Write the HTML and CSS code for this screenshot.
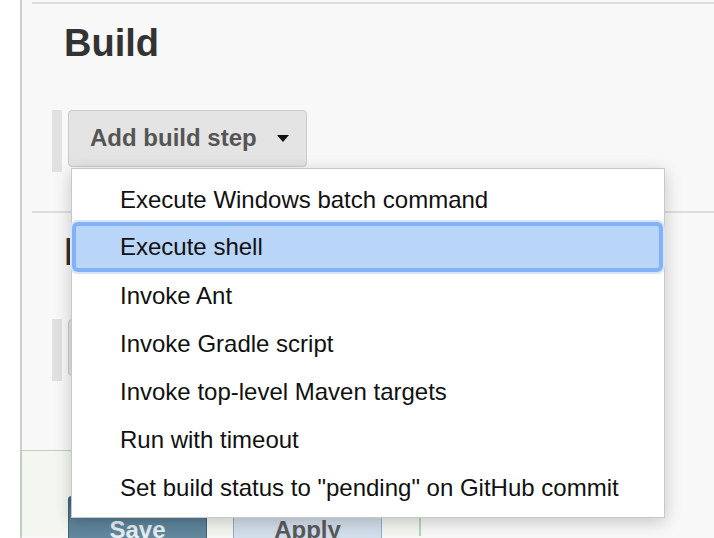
FILE: index.html
```html
<!DOCTYPE html>
<html>
<head>
<meta charset="utf-8">
<link rel="stylesheet" href="styles.css">
</head>
<body>
<div class="page">
  <section class="section first">
    <h2 class="heading">Build</h2>
    <div class="row">
      <div class="handle"></div>
      <button class="add-btn build-btn">Add build step <span class="caret"></span></button>
    </div>
  </section>
  <section class="section second">
    <h2 class="heading">Post-build Actions</h2>
    <div class="row">
      <div class="handle"></div>
      <button class="add-btn post-btn">Add post-build action <span class="caret"></span></button>
    </div>
  </section>
  <div class="bottom-bar">
    <button class="save-btn">Save</button>
    <button class="apply-btn">Apply</button>
  </div>

  <ul class="menu">
    <li class="item">Execute Windows batch command</li>
    <li class="item active">Execute shell</li>
    <li class="item">Invoke Ant</li>
    <li class="item">Invoke Gradle script</li>
    <li class="item">Invoke top-level Maven targets</li>
    <li class="item">Run with timeout</li>
    <li class="item">Set build status to "pending" on GitHub commit</li>
  </ul>
</div>
</body>
</html>
```

FILE: styles.css
```css
* { box-sizing: border-box; }

html, body {
  margin: 0;
  padding: 0;
  background: #ffffff;
  font-family: "Liberation Sans", Arial, Helvetica, sans-serif;
}

body {
  width: 714px;
  height: 538px;
  overflow: hidden;
}

.page {
  position: relative;
  margin-left: 20px;
  height: 538px;
  border-left: 2px solid #cfcfcf;
  background: #f8f8f8;
  padding-top: 2px;
}

.section {
  margin-left: 10px;
  border-top: 2px solid #dddddd;
  padding-left: 20px;
}

.section.first { height: 209px; }
.section.second { height: 239px; }

.heading {
  margin: 17px 0 0 12px;
  font-size: 38px;
  line-height: 44px;
  font-weight: bold;
  color: #333333;
}

.section.second .heading { margin-top: 17px; }

.row {
  display: flex;
  align-items: flex-start;
  gap: 6px;
  margin-top: 45px;
}

.handle {
  width: 10px;
  height: 62px;
  background: #e1e1e1;
}

.add-btn {
  display: flex;
  align-items: center;
  height: 57px;
  padding: 0 0 2px 21px;
  border: 1px solid #cbcbcb;
  border-radius: 4px;
  background: #e4e4e4;
  font-family: inherit;
  font-size: 24px;
  font-weight: bold;
  color: #555555;
}

.build-btn { width: 239px; }
.post-btn { width: 300px; }

.caret {
  margin-left: 20px;
  width: 0;
  height: 0;
  border-left: 6px solid transparent;
  border-right: 6px solid transparent;
  border-top: 7px solid #111111;
  margin-top: 2px;
}

.bottom-bar {
  display: flex;
  align-items: flex-start;
  gap: 26px;
  width: 401px;
  height: 86px;
  margin-left: -2px;
  border-top: 1px solid #bcd2bf;
  border-left: 2px solid #bcd2bf;
  border-right: 2px solid #bcd2bf;
  background: #f3f7f0;
  padding: 45px 0 0 46px;
}

.save-btn, .apply-btn {
  height: 68px;
  font-family: inherit;
  font-size: 24px;
  font-weight: bold;
  border-radius: 3px;
  padding: 0;
}

.save-btn {
  width: 139px;
  border: 1px solid #3f6378;
  background: linear-gradient(#3e6880 0%, #5d8399 40%, #6d93a7 100%);
  color: #e6eef2;
}

.apply-btn {
  width: 149px;
  border: 1px solid #8eaed2;
  background: #d3dfeb;
  color: #5a5a5a;
}

.menu {
  position: absolute;
  left: 49px;
  top: 168px;
  width: 594px;
  height: 350px;
  margin: 0;
  padding: 7px 0 0 0;
  list-style: none;
  background: #ffffff;
  border: 1px solid #c8c8c8;
  box-shadow: 0 4px 16px rgba(0, 0, 0, 0.2);
}

.item {
  display: flex;
  align-items: center;
  height: 48px;
  padding-left: 48px;
  font-size: 24px;
  color: #111111;
}

.item.active {
  height: 50px;
  margin: -2px 1px 0 0;
  padding-left: 44px;
  background: #b9d5f8;
  border: 4px solid #84b3f5;
  border-radius: 6px;
  box-shadow: 0 0 0 2px #d3e4fb;
}
```
